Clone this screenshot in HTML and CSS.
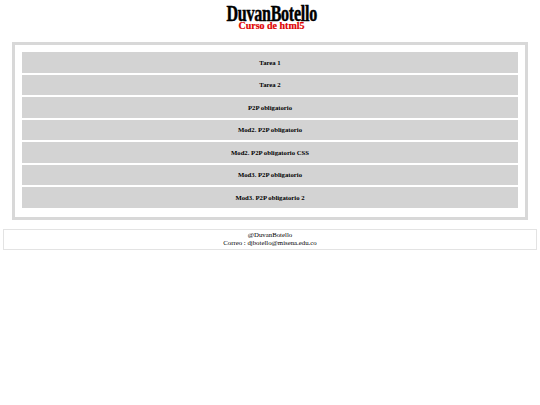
FILE: index.html
```html
<!DOCTYPE html>
<html lang="es">
<head>
<meta charset="utf-8">
<title>DuvanBotello</title>
<link rel="stylesheet" href="styles.css">
</head>
<body>
<header class="header">
  <h1 class="brand">DuvanBotello</h1>
  <h2 class="subtitle">Curso de html5</h2>
</header>
<main class="panel">
  <nav class="menu">
    <a class="item" href="#">Tarea 1</a>
    <a class="item" href="#">Tarea 2</a>
    <a class="item" href="#">P2P obligatorio</a>
    <a class="item" href="#">Mod2. P2P obligatorio</a>
    <a class="item" href="#">Mod2. P2P obligatorio CSS</a>
    <a class="item" href="#">Mod3. P2P obligatorio</a>
    <a class="item" href="#">Mod3. P2P obligatorio 2</a>
  </nav>
</main>
<footer class="footer">
  <div>@DuvanBotello</div>
  <div>Correo : djbotello@misena.edu.co</div>
</footer>
</body>
</html>
```
FILE: styles.css
```css
html, body {
  margin: 0;
  padding: 0;
  background: #ffffff;
}
body {
  font-family: "Liberation Serif", "Times New Roman", serif;
  color: #000;
  padding: 0 3px;
}
.header {
  display: flex;
  flex-direction: column;
  align-items: center;
  padding: 5px 0 0 3px;
  height: 39px;
  box-sizing: border-box;
}
.brand {
  margin: 0;
  font-size: 23px;
  line-height: 17px;
  font-weight: bold;
  letter-spacing: -0.4px;
  transform: scaleX(0.7);
  -webkit-text-stroke: 0.5px #000;
  white-space: nowrap;
}
.subtitle {
  margin: 0;
  font-size: 10px;
  line-height: 8px;
  font-weight: bold;
  color: #e00000;
  -webkit-text-stroke: 0.2px #e00000;
}
.panel {
  margin: 3px 9px 0 9px;
  border: 3px solid #d8d8d8;
  padding: 7px 7px 9px 7px;
}
.menu {
  display: flex;
  flex-direction: column;
  gap: 2px;
}
.item {
  display: flex;
  align-items: center;
  justify-content: center;
  height: 20.5px;
  background: #d3d3d3;
  color: #000;
  text-decoration: none;
  font-weight: bold;
  font-size: 6.7px;
}
.footer {
  margin-top: 9px;
  border: 1px solid #e3e3e3;
  text-align: center;
  font-size: 6.8px;
  line-height: 8px;
  padding: 1.5px 0 1.5px 0;
}
```
